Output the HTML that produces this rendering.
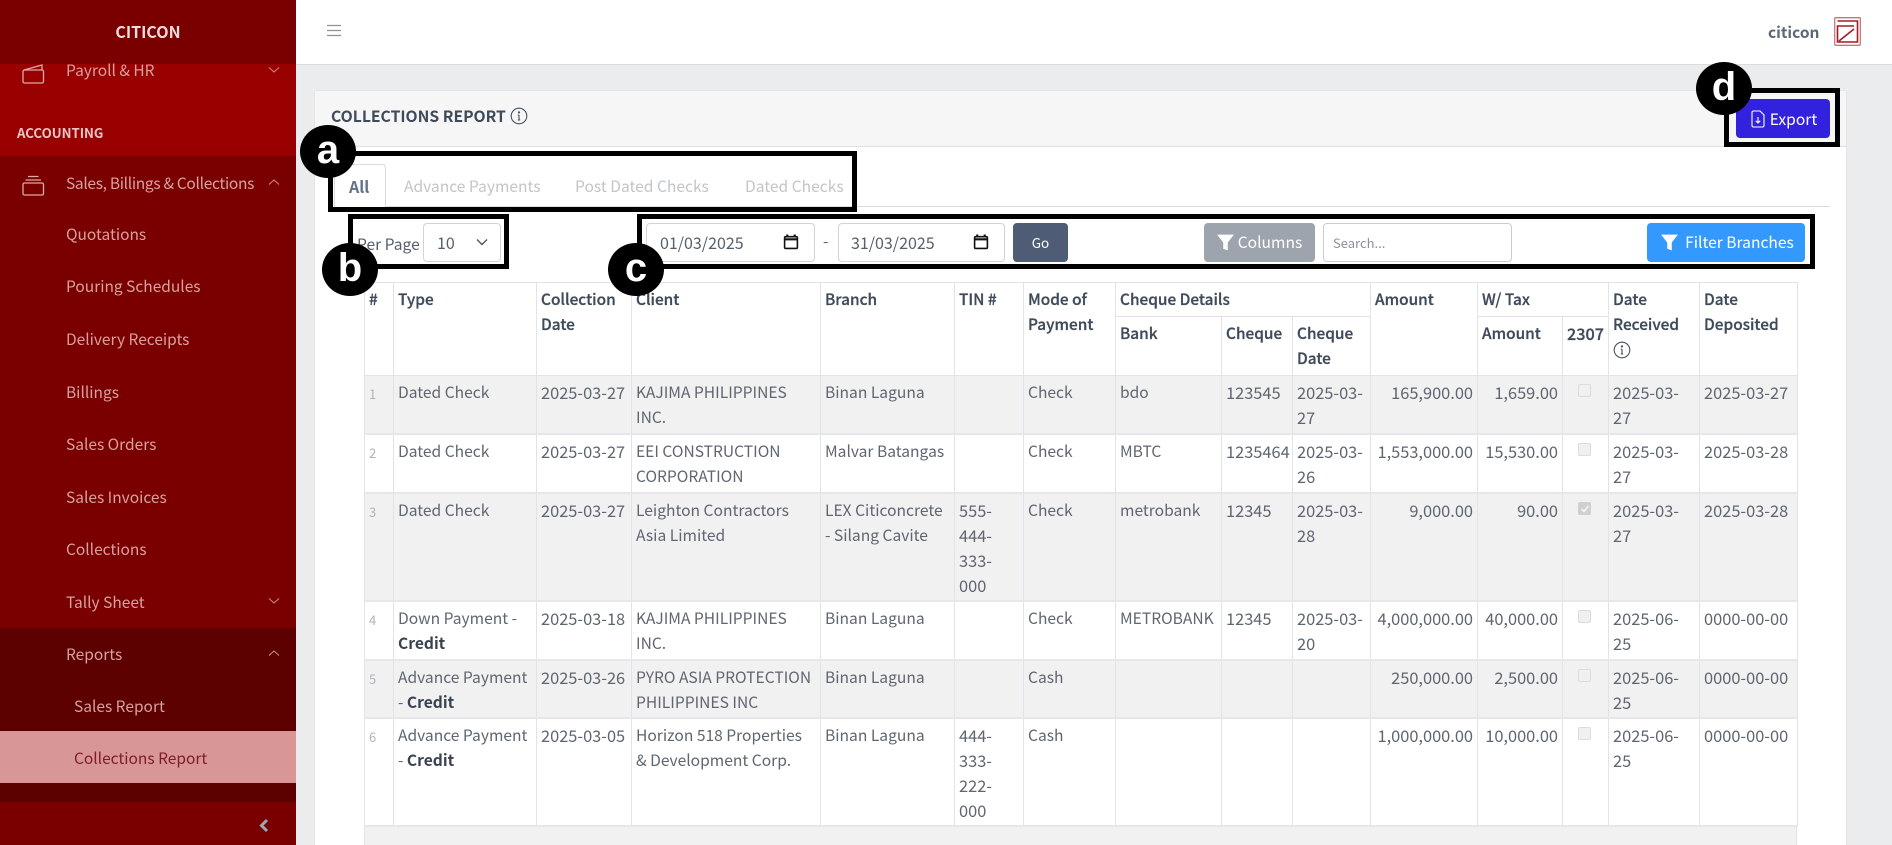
<!DOCTYPE html>
<html><head><meta charset="utf-8"><title>Collections Report</title>
<style>
*{box-sizing:border-box}
html,body{margin:0;padding:0;width:1892px;height:845px;overflow:hidden;background:#ebecee}
#root{position:relative;width:1892px;height:845px;overflow:hidden;background:#ebecee;font-family:"Noto Sans CJK JP","Liberation Sans",sans-serif;font-size:15.6px;color:#5f6670}
.a{position:absolute}
.t{position:absolute;white-space:nowrap;line-height:24px;transform:translateY(-12px)}
.side{left:0;top:0;width:296px;height:845px;background:#7a0000;overflow:hidden}
.s{color:#d8a0a0;left:66px;font-size:15.5px}
.chev{position:absolute;left:267px;width:14px;height:8px}
.box{position:absolute;border:5px solid #000;background:transparent}
.cir{position:absolute;width:56px;height:53px;border-radius:50%;background:#000;color:#fff;font:bold 40px/50px "Liberation Sans",sans-serif;text-align:center}
.ctl{position:absolute;top:223px;height:39px;border:1px solid #ced4da;border-radius:4px;background:#fff;line-height:37px;color:#56606c;white-space:nowrap;font-size:16px}
.btn{position:absolute;top:223px;height:39px;border-radius:4px;color:#fff;line-height:39px;text-align:center;white-space:nowrap}
table{position:absolute;left:364px;top:282px;width:1433px;border-collapse:collapse;table-layout:fixed;background:#fff;font-size:16.4px}
td,th{border:1px solid #e1e3e8;padding:4px 4px 0 4px;line-height:25px;vertical-align:top;text-align:left;font-weight:400;overflow:visible}
th{color:#3f4a5a;font-weight:500;-webkit-text-stroke:.25px #3f4a5a;font-size:15.4px}
tbody td:nth-child(2),tbody td:nth-child(4),tbody td:nth-child(5),tbody td:nth-child(7),tbody td:nth-child(8){font-size:15.6px}
tbody tr{border-bottom:2px solid #e6e7eb}
tbody tr.g td{background:#f1f1f2}
td.n{font-size:13px;color:#aeb4bc;padding-top:5px}
td.r{text-align:right}
b{color:#3a4350;font-weight:700}
.ck{display:block;width:13px;height:13px;border:1px solid #dcdcdc;border-radius:2px;background:#f0f0f1;margin:4px 0 0 11px}
.ck.on{background:#cfd0d2;border-color:#cfd0d2;position:relative}
</style></head><body>
<div id="root">

<div class="a side">
  <div class="a" style="left:0;top:64px;width:296px;height:92px;background:#990000"></div>
  <div class="a" style="left:0;top:0;width:296px;height:64px;background:#7a0000"></div>
  <div class="t" style="left:0;width:296px;text-align:center;top:31px;color:#f3dcdc;font-weight:700;font-size:16px">CITICON</div>
  <svg class="a" style="left:22px;top:64px" width="23" height="20" viewBox="0 0 23 20" fill="none" stroke="#e0a8a8" stroke-width="1.3"><rect x="1" y="6" width="20.5" height="13" rx="1.5"/><path d="M2 6 L20 1 V6"/></svg>
  <div class="t s" style="top:70px">Payroll &amp; HR</div>
  <svg class="chev" style="top:66px" viewBox="0 0 14 8" fill="none" stroke="#c98585" stroke-width="1.1"><path d="M2 1.5 L7 6 L12 1.5"/></svg>
  <div class="t" style="left:17px;top:133px;color:#ecc4c4;font-weight:700;font-size:13.2px">ACCOUNTING</div>
  <svg class="a" style="left:22px;top:175px" width="23" height="21" viewBox="0 0 23 21" fill="none" stroke="#e0a8a8" stroke-width="1.3"><rect x="1" y="8" width="20.5" height="12" rx="1.5"/><path d="M3.5 5 H19 M6 1.5 H16.5"/></svg>
  <div class="t s" style="top:183px;letter-spacing:-.31px">Sales, Billings &amp; Collections</div>
  <svg class="chev" style="top:178px" viewBox="0 0 14 8" fill="none" stroke="#c98585" stroke-width="1.1"><path d="M2 6.5 L7 2 L12 6.5"/></svg>
  <div class="t s" style="top:234px">Quotations</div>
  <div class="t s" style="top:286px">Pouring Schedules</div>
  <div class="t s" style="top:339px">Delivery Receipts</div>
  <div class="t s" style="top:392px">Billings</div>
  <div class="t s" style="top:444px">Sales Orders</div>
  <div class="t s" style="top:497px">Sales Invoices</div>
  <div class="t s" style="top:549px">Collections</div>
  <div class="t s" style="top:602px">Tally Sheet</div>
  <svg class="chev" style="top:597px" viewBox="0 0 14 8" fill="none" stroke="#c98585" stroke-width="1.1"><path d="M2 1.5 L7 6 L12 1.5"/></svg>
  <div class="a" style="left:0;top:628px;width:296px;height:174px;background:#5c0000"></div>
  <div class="t s" style="top:654px">Reports</div>
  <svg class="chev" style="top:649px" viewBox="0 0 14 8" fill="none" stroke="#c98585" stroke-width="1.1"><path d="M2 6.5 L7 2 L12 6.5"/></svg>
  <div class="t s" style="left:74px;top:706px">Sales Report</div>
  <div class="a" style="left:0;top:731px;width:296px;height:52px;background:#d99696"></div>
  <div class="t s" style="left:74px;top:758px;color:#7e1c2a">Collections Report</div>
  <svg class="a" style="left:258px;top:818px" width="12" height="15" viewBox="0 0 12 15" fill="none" stroke="#9aa8b4" stroke-width="3"><path d="M9 2 L3.5 7.5 L9 13"/></svg>
</div>

<div class="a" style="left:296px;top:0;width:1596px;height:65px;background:#fff;border-bottom:1px solid #d8dbe0"></div>
<svg class="a" style="left:326px;top:23px" width="16" height="15" viewBox="0 0 16 15" stroke="#8d9299" stroke-width="1.3"><path d="M1 2.5 H15 M1 7.5 H15 M1 12.5 H15"/></svg>
<div class="t" style="left:1768px;top:32px;font-weight:700;color:#5b6877;font-size:15.5px">citicon</div>
<svg class="a" style="left:1834px;top:17px" width="27" height="29" viewBox="0 0 27 29" fill="none"><rect x=".7" y=".7" width="25.6" height="27.6" rx="1" stroke="#c4777b" stroke-width="1.3"/><path d="M3.5 4 H23.5 V25 H3.5 V9 H20" stroke="#a01c24" stroke-width="1.6"/><path d="M5 24 L20 12" stroke="#a01c24" stroke-width="1.6"/></svg>

<div class="a" style="left:314px;top:90px;width:1533px;height:760px;background:#fff;border:1px solid #e2e4e8;border-radius:4px"></div>
<div class="a" style="left:315px;top:91px;width:1531px;height:56px;background:#f6f6f6;border-bottom:1px solid #dcdfe3"></div>
<div class="t" style="left:331px;top:116px;font-weight:700;color:#3f4a5a;font-size:15.7px">COLLECTIONS REPORT</div>
<svg class="a" style="left:510px;top:107px" width="18" height="18" viewBox="0 0 18 18" fill="none" stroke="#46505e" stroke-width="1.1"><circle cx="9" cy="9" r="7.8"/><path d="M9 8 V13 M7.8 13 H10.2 M7.8 8 H9" /><circle cx="9" cy="5.4" r=".6"/></svg>
<div class="btn" style="left:1736px;top:99px;width:94px;background:#3322dd;font-size:15.6px;padding-left:2px;line-height:41px"><svg style="vertical-align:-3px;margin-right:5px" width="14" height="18" viewBox="0 0 14 18" fill="none" stroke="#fff" stroke-width="1.1"><path d="M1 2.5 A1.5 1.5 0 0 1 2.5 1 H9 L13 5 V15.5 A1.5 1.5 0 0 1 11.5 17 H2.5 A1.5 1.5 0 0 1 1 15.5 Z M7 7 V13 M4.8 10.8 L7 13 L9.2 10.8"/></svg>Export</div>

<div class="a" style="left:334px;top:206px;width:1496px;height:1px;background:#d8dbe0"></div>
<div class="a" style="left:334px;top:164px;width:52px;height:43px;background:#fff;border:1px solid #d8dbe0;border-bottom:0;border-radius:4px 4px 0 0"></div>
<div class="t" style="left:349px;top:186px;font-weight:700;color:#64718a;font-size:16px">All</div>
<div class="t" style="left:404px;top:186px;color:#c2c5c9">Advance Payments</div>
<div class="t" style="left:575px;top:186px;color:#c2c5c9">Post Dated Checks</div>
<div class="t" style="left:745px;top:186px;color:#c2c5c9">Dated Checks</div>

<div class="t" style="left:357px;top:244px;color:#56606c">Per Page</div>
<div class="ctl" style="left:423px;width:78px;padding-left:13px">10<svg class="a" style="left:51px;top:14px" width="14" height="9" viewBox="0 0 14 9" fill="none" stroke="#4b5563" stroke-width="1.4"><path d="M2 1.5 L7 6.5 L12 1.5"/></svg></div>
<div class="ctl" style="left:646px;width:169px;padding-left:13px">01/03/2025<svg class="a" style="left:136px;top:10px" width="16" height="16" viewBox="0 0 15 15" fill="none" stroke="#111" stroke-width="1.5"><rect x="1.5" y="2.5" width="12" height="11" rx="1"/><path d="M1.5 5 H13.5 M4 0.5 V3 M11 .5 V3" stroke-width="2"/></svg></div>
<div class="t" style="left:823px;top:241px">-</div>
<div class="ctl" style="left:838px;width:167px;padding-left:12px">31/03/2025<svg class="a" style="left:134px;top:10px" width="16" height="16" viewBox="0 0 15 15" fill="none" stroke="#111" stroke-width="1.5"><rect x="1.5" y="2.5" width="12" height="11" rx="1"/><path d="M1.5 5 H13.5 M4 0.5 V3 M11 .5 V3" stroke-width="2"/></svg></div>
<div class="btn" style="left:1013px;width:55px;background:#4e5d75;font-size:13.5px;line-height:38px">Go</div>
<div class="btn" style="left:1204px;width:111px;background:#9ea4ad;font-size:15.6px"><svg style="vertical-align:-3px;margin-right:4px" width="17" height="17" viewBox="0 0 15 15" fill="#fff"><path d="M0 0.5 H15 L9.5 7.5 V14.5 L5.5 13 V7.5 Z"/></svg>Columns</div>
<div class="ctl" style="left:1323px;width:189px;padding-left:9px;font-size:13px;color:#8a929b;border-color:#c9cdd3">Search...</div>
<div class="btn" style="left:1647px;width:158px;background:#3399ff;font-size:15.6px;padding-left:3px"><svg style="vertical-align:-3px;margin-right:7px" width="17" height="17" viewBox="0 0 15 15" fill="#fff"><path d="M0 0.5 H15 L9.5 7.5 V14.5 L5.5 13 V7.5 Z"/></svg>Filter Branches</div>

<div class="a" style="left:364px;top:826px;width:1433px;height:19px;background:#f1f1f2;border-left:1px solid #e1e3e8;border-right:1px solid #e1e3e8"></div>
<table>
<colgroup><col style="width:29px"><col style="width:143px"><col style="width:95px"><col style="width:189px"><col style="width:134px"><col style="width:69px"><col style="width:92px"><col style="width:106px"><col style="width:71px"><col style="width:78px"><col style="width:107px"><col style="width:85px"><col style="width:46px"><col style="width:91px"><col style="width:98px"></colgroup>
<thead>
<tr style="height:34px"><th rowspan="2">#</th><th rowspan="2">Type</th><th rowspan="2">Collection<br>Date</th><th rowspan="2">Client</th><th rowspan="2">Branch</th><th rowspan="2">TIN #</th><th rowspan="2">Mode of<br>Payment</th><th colspan="3">Cheque Details</th><th rowspan="2">Amount</th><th colspan="2">W/ Tax</th><th rowspan="2">Date<br>Received <svg width="18" height="18" viewBox="0 0 18 18" fill="none" stroke="#46505e" stroke-width="1.1" style="display:block;margin-top:4px"><circle cx="9" cy="9" r="7.8"/><path d="M9 8 V13 M7.8 13 H10.2 M7.8 8 H9"/><circle cx="9" cy="5.4" r=".6"/></svg></th><th rowspan="2">Date<br>Deposited</th></tr>
<tr style="height:59px"><th>Bank</th><th>Cheque</th><th>Cheque<br>Date</th><th>Amount</th><th style="padding-right:0;font-size:16.2px">2307</th></tr>
</thead>
<tbody>
<tr class="g" style="height:58px"><td class="n">1</td><td>Dated Check</td><td style="padding-right:0">2025-03-27</td><td>KAJIMA PHILIPPINES<br>INC.</td><td>Binan Laguna</td><td></td><td>Check</td><td>bdo</td><td>123545</td><td>2025-03-<br>27</td><td class="r">165,900.00</td><td class="r">1,659.00</td><td><span class="ck"></span></td><td>2025-03-<br>27</td><td style="padding-right:0">2025-03-27</td></tr>
<tr style="height:59px"><td class="n">2</td><td>Dated Check</td><td style="padding-right:0">2025-03-27</td><td>EEI CONSTRUCTION<br>CORPORATION</td><td style="padding-right:0">Malvar Batangas</td><td></td><td>Check</td><td>MBTC</td><td style="padding-right:0">1235464</td><td>2025-03-<br>26</td><td class="r">1,553,000.00</td><td class="r">15,530.00</td><td><span class="ck"></span></td><td>2025-03-<br>27</td><td style="padding-right:0">2025-03-28</td></tr>
<tr class="g" style="height:108px"><td class="n">3</td><td>Dated Check</td><td style="padding-right:0">2025-03-27</td><td>Leighton Contractors<br>Asia Limited</td><td style="padding-right:0">LEX Citiconcrete<br>- Silang Cavite</td><td>555-<br>444-<br>333-<br>000</td><td>Check</td><td>metrobank</td><td>12345</td><td>2025-03-<br>28</td><td class="r">9,000.00</td><td class="r">90.00</td><td><span class="ck on"><svg class="a" style="left:1px;top:1px" width="10" height="10" viewBox="0 0 10 10" fill="none" stroke="#f4f4f4" stroke-width="1.6"><path d="M1.5 5 L4 7.5 L8.5 2"/></svg></span></td><td>2025-03-<br>27</td><td style="padding-right:0">2025-03-28</td></tr>
<tr style="height:59px"><td class="n">4</td><td>Down Payment -<br><b>Credit</b></td><td style="padding-right:0">2025-03-18</td><td>KAJIMA PHILIPPINES<br>INC.</td><td>Binan Laguna</td><td></td><td>Check</td><td style="padding-right:0">METROBANK</td><td>12345</td><td>2025-03-<br>20</td><td class="r">4,000,000.00</td><td class="r">40,000.00</td><td><span class="ck"></span></td><td>2025-06-<br>25</td><td style="padding-right:0">0000-00-00</td></tr>
<tr class="g" style="height:58px"><td class="n">5</td><td style="padding-right:0">Advance Payment<br>- <b>Credit</b></td><td style="padding-right:0">2025-03-26</td><td style="padding-right:0;white-space:nowrap">PYRO ASIA PROTECTION<br>PHILIPPINES INC</td><td>Binan Laguna</td><td></td><td>Cash</td><td></td><td></td><td></td><td class="r">250,000.00</td><td class="r">2,500.00</td><td><span class="ck"></span></td><td>2025-06-<br>25</td><td style="padding-right:0">0000-00-00</td></tr>
<tr style="height:108px"><td class="n">6</td><td style="padding-right:0">Advance Payment<br>- <b>Credit</b></td><td style="padding-right:0">2025-03-05</td><td>Horizon 518 Properties<br>&amp; Development Corp.</td><td>Binan Laguna</td><td>444-<br>333-<br>222-<br>000</td><td>Cash</td><td></td><td></td><td></td><td class="r">1,000,000.00</td><td class="r">10,000.00</td><td><span class="ck"></span></td><td>2025-06-<br>25</td><td style="padding-right:0">0000-00-00</td></tr>
</tbody>
</table>

<div class="box" style="left:328px;top:151px;width:529px;height:61px"></div>
<div class="box" style="left:348px;top:214px;width:161px;height:55px"></div>
<div class="box" style="left:637px;top:214px;width:1178px;height:55px"></div>
<div class="box" style="left:1724px;top:88px;width:116px;height:59px"></div>
<div class="cir" style="left:300px;top:125px">a</div>
<div class="cir" style="left:322px;top:243px">b</div>
<div class="cir" style="left:608px;top:243px">c</div>
<div class="cir" style="left:1696px;top:62px">d</div>
</div>
</body></html>
